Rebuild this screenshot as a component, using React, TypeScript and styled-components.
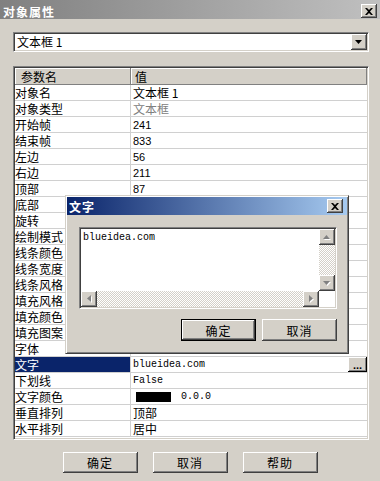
import React from "react";
import styled, { createGlobalStyle, css } from "styled-components";

const face = "#d4d0c8";
const cjk = `"Noto Sans CJK SC", "Noto Sans", sans-serif`;
const mono = `"Liberation Mono", "Noto Sans CJK SC", monospace`;
const sans = `"Liberation Sans", "Noto Sans CJK SC", sans-serif`;

const GlobalStyle = createGlobalStyle`
  html, body {
    margin: 0;
    padding: 0;
    background: ${face};
  }
  body {
    font-family: ${cjk};
    font-size: 12px;
    color: #000;
  }
`;

const raised = css`
  background: ${face};
  box-shadow: inset -1px -1px #404040, inset 1px 1px #fff,
    inset -2px -2px #808080, inset 2px 2px ${face};
`;

const Window = styled.div`
  position: relative;
  width: 380px;
  height: 481px;
  background: ${face};
  display: flex;
  flex-direction: column;
  overflow: hidden;
`;

const TitleBar = styled.div<{ $active?: boolean }>`
  flex-shrink: 0;
  box-sizing: border-box;
  height: ${(p) => (p.$active ? 18 : 19)}px;
  padding: ${(p) => (p.$active ? "0 4px 0 2px" : "3px 3px 0 3px")};
  display: flex;
  align-items: center;
  justify-content: space-between;
  background: linear-gradient(
    to right,
    ${(p) => (p.$active ? "#0a246a, #a6caf0" : "#808080, #c0c0c0")}
  );
  color: #fff;
  font-weight: bold;
  font-size: 12px;
  letter-spacing: 1px;
`;

const CloseButton = styled.div`
  ${raised};
  width: 16px;
  height: 14px;
  display: flex;
  align-items: center;
  justify-content: center;
`;

const Body = styled.div`
  display: flex;
  flex-direction: column;
  padding: 13px 0 0 13px;
`;

const Sunken = styled.div`
  box-sizing: border-box;
  border: 1px solid;
  border-color: #808080 #fff #fff #808080;
  padding: 1px;
  box-shadow: inset 1px 1px #404040, inset -1px -1px ${face};
  background: #fff;
`;

const Combo = styled(Sunken)`
  width: 356px;
  height: 20px;
  display: flex;
  align-items: center;
  padding-left: 3px;
  line-height: 16px;
`;

const ComboText = styled.span`
  flex: 1;
`;

const DropButton = styled.div`
  ${raised};
  width: 16px;
  height: 16px;
  display: flex;
  align-items: center;
  justify-content: center;
`;

const PropGrid = styled(Sunken)`
  margin-top: 14px;
  width: 356px;
  height: 374px;
  overflow: hidden;
  display: grid;
  grid-template-columns: 116px 1fr;
  grid-template-rows: 17px;
  grid-auto-rows: 16px;
  align-content: start;
`;

const HeadCell = styled.div<{ $indent: number }>`
  background: ${face};
  box-shadow: inset -1px -1px #808080, inset 1px 1px #fff;
  padding-left: ${(p) => p.$indent}px;
  line-height: 17px;
`;

const LabelCell = styled.div<{ $selected?: boolean }>`
  box-sizing: border-box;
  border-bottom: 1px solid #d0d0d0;
  border-right: 1px solid #d0d0d0;
  line-height: 15px;
  white-space: nowrap;
  background: ${(p) => (p.$selected ? "#0a246a" : "#fff")};
  color: ${(p) => (p.$selected ? "#fff" : "#000")};
`;

const ValueCell = styled.div<{ $font: "cjk" | "mono" | "num"; $muted?: boolean }>`
  box-sizing: border-box;
  border-bottom: 1px solid #d0d0d0;
  padding-left: 2px;
  display: flex;
  align-items: center;
  white-space: pre;
  color: ${(p) => (p.$muted ? "#808080" : "#000")};
  font-family: ${(p) => (p.$font === "mono" ? mono : p.$font === "num" ? sans : cjk)};
  font-size: ${(p) => (p.$font === "mono" ? 10 : p.$font === "num" ? 11 : 12)}px;
`;

const EllipsisButton = styled.div`
  margin-left: auto;
  align-self: stretch;
  width: 19px;
  background: ${face};
  box-shadow: inset -1px -1px #000, inset 1px 1px #fff, inset -2px -2px #808080;
  text-align: center;
  font-family: ${sans};
  font-weight: bold;
  font-size: 11px;
  line-height: 16px;
`;

const Swatch = styled.span`
  display: inline-block;
  width: 35px;
  height: 10px;
  margin: 0 10px 0 3px;
  background: #000;
`;

const ButtonRow = styled.div<{ $gap: number; $end?: boolean }>`
  display: flex;
  gap: ${(p) => p.$gap}px;
  justify-content: ${(p) => (p.$end ? "flex-end" : "center")};
`;

const MainButtons = styled(ButtonRow)`
  margin: 12px 0 0 -13px;
`;

const PushButton = styled.div<{ $default?: boolean; $w: number; $h: number }>`
  ${raised};
  box-sizing: border-box;
  width: ${(p) => p.$w}px;
  height: ${(p) => p.$h}px;
  display: flex;
  align-items: center;
  justify-content: center;
  font-size: 12px;
  letter-spacing: 1px;
  ${(p) =>
    p.$default &&
    css`
      box-shadow: inset 0 0 0 1px #000, inset -2px -2px #404040,
        inset 2px 2px #fff, inset -3px -3px #808080;
    `}
`;

const Dialog = styled.div`
  position: absolute;
  left: 65px;
  top: 195px;
  width: 284px;
  height: 159px;
  box-sizing: border-box;
  border: 1px solid;
  border-color: ${face} #404040 #404040 ${face};
  padding: 1px;
  box-shadow: inset 1px 1px #fff, inset -1px -1px #808080;
  background: ${face};
  display: flex;
  flex-direction: column;
`;

const DialogBody = styled.div`
  display: flex;
  flex-direction: column;
  padding: 12px 10px 0 12px;
`;

const TextBox = styled(Sunken)`
  height: 82px;
  display: grid;
  grid-template-columns: 1fr 16px;
  grid-template-rows: 1fr 16px;
  margin-bottom: 10px;
`;

const TextContent = styled.div`
  padding: 3px 2px;
  font-family: ${mono};
  font-size: 10px;
  line-height: 12px;
`;

const ScrollBar = styled.div<{ $vertical?: boolean }>`
  display: flex;
  flex-direction: ${(p) => (p.$vertical ? "column" : "row")};
`;

const Track = styled.div`
  flex: 1;
  background-color: #fff;
  background-image: repeating-conic-gradient(${face} 0 25%, #fff 0 50%);
  background-size: 2px 2px;
`;

const ArrowButton = styled.div`
  ${raised};
  width: 16px;
  height: 16px;
  flex-shrink: 0;
  display: flex;
  align-items: center;
  justify-content: center;
`;

const XIcon = () => (
  <svg width="8" height="7" viewBox="0 0 8 7">
    <path d="M0 0h2l2 2 2-2h2L5 3.5 8 7H6L4 5 2 7H0l3-3.5z" fill="#000" />
  </svg>
);

type Dir = "up" | "down" | "left" | "right";

const arrowPoints: Record<Dir, string> = {
  up: "3.5,0 7,4 0,4",
  down: "0,0 7,0 3.5,4",
  left: "4,0 4,7 0,3.5",
  right: "0,0 4,3.5 0,7",
};

const Arrow = ({ dir, color = "#808080" }: { dir: Dir; color?: string }) => {
  const horiz = dir === "left" || dir === "right";
  const w = horiz ? 5 : 8;
  const h = horiz ? 8 : 5;
  return (
    <svg width={w} height={h} viewBox={`0 0 ${w} ${h}`}>
      {color === "#808080" && (
        <polygon points={arrowPoints[dir]} fill="#fff" transform="translate(1 1)" />
      )}
      <polygon points={arrowPoints[dir]} fill={color} />
    </svg>
  );
};

type Row = {
  label: string;
  value?: string;
  font?: "cjk" | "mono" | "num";
  muted?: boolean;
  selected?: boolean;
  color?: boolean;
};

const rows: Row[] = [
  { label: "对象名", value: "文本框 1" },
  { label: "对象类型", value: "文本框", muted: true },
  { label: "开始帧", value: "241", font: "num" },
  { label: "结束帧", value: "833", font: "num" },
  { label: "左边", value: "56", font: "num" },
  { label: "右边", value: "211", font: "num" },
  { label: "顶部", value: "87", font: "num" },
  { label: "底部" },
  { label: "旋转" },
  { label: "绘制模式" },
  { label: "线条颜色" },
  { label: "线条宽度" },
  { label: "线条风格" },
  { label: "填充风格" },
  { label: "填充颜色" },
  { label: "填充图案" },
  { label: "字体" },
  { label: "文字", value: "blueidea.com", font: "mono", selected: true },
  { label: "下划线", value: "False", font: "mono" },
  { label: "文字颜色", value: "0.0.0", font: "mono", color: true },
  { label: "垂直排列", value: "顶部" },
  { label: "水平排列", value: "居中" },
];

const App = () => (
  <>
    <GlobalStyle />
    <Window>
      <TitleBar>
        <span>对象属性</span>
        <CloseButton>
          <XIcon />
        </CloseButton>
      </TitleBar>
      <Body>
        <Combo>
          <ComboText>文本框 1</ComboText>
          <DropButton>
            <Arrow dir="down" color="#000" />
          </DropButton>
        </Combo>
        <PropGrid>
          <HeadCell $indent={6}>参数名</HeadCell>
          <HeadCell $indent={4}>值</HeadCell>
          {rows.map((r) => (
            <React.Fragment key={r.label}>
              <LabelCell $selected={r.selected}>{r.label}</LabelCell>
              <ValueCell $font={r.font ?? "cjk"} $muted={r.muted}>
                {r.color && <Swatch />}
                {r.value}
                {r.selected && <EllipsisButton>...</EllipsisButton>}
              </ValueCell>
            </React.Fragment>
          ))}
        </PropGrid>
        <MainButtons $gap={15}>
          <PushButton $w={75} $h={21}>确定</PushButton>
          <PushButton $w={75} $h={21}>取消</PushButton>
          <PushButton $w={75} $h={21}>帮助</PushButton>
        </MainButtons>
      </Body>

      <Dialog>
        <TitleBar $active>
          <span>文字</span>
          <CloseButton>
            <XIcon />
          </CloseButton>
        </TitleBar>
        <DialogBody>
          <TextBox>
            <TextContent>blueidea.com</TextContent>
            <ScrollBar $vertical>
              <ArrowButton>
                <Arrow dir="up" />
              </ArrowButton>
              <Track />
              <ArrowButton>
                <Arrow dir="down" />
              </ArrowButton>
            </ScrollBar>
            <ScrollBar>
              <ArrowButton>
                <Arrow dir="left" />
              </ArrowButton>
              <Track />
              <ArrowButton>
                <Arrow dir="right" />
              </ArrowButton>
            </ScrollBar>
          </TextBox>
          <ButtonRow $gap={6} $end>
            <PushButton $default $w={75} $h={22}>确定</PushButton>
            <PushButton $w={75} $h={22}>取消</PushButton>
          </ButtonRow>
        </DialogBody>
      </Dialog>
    </Window>
  </>
);

export default App;
